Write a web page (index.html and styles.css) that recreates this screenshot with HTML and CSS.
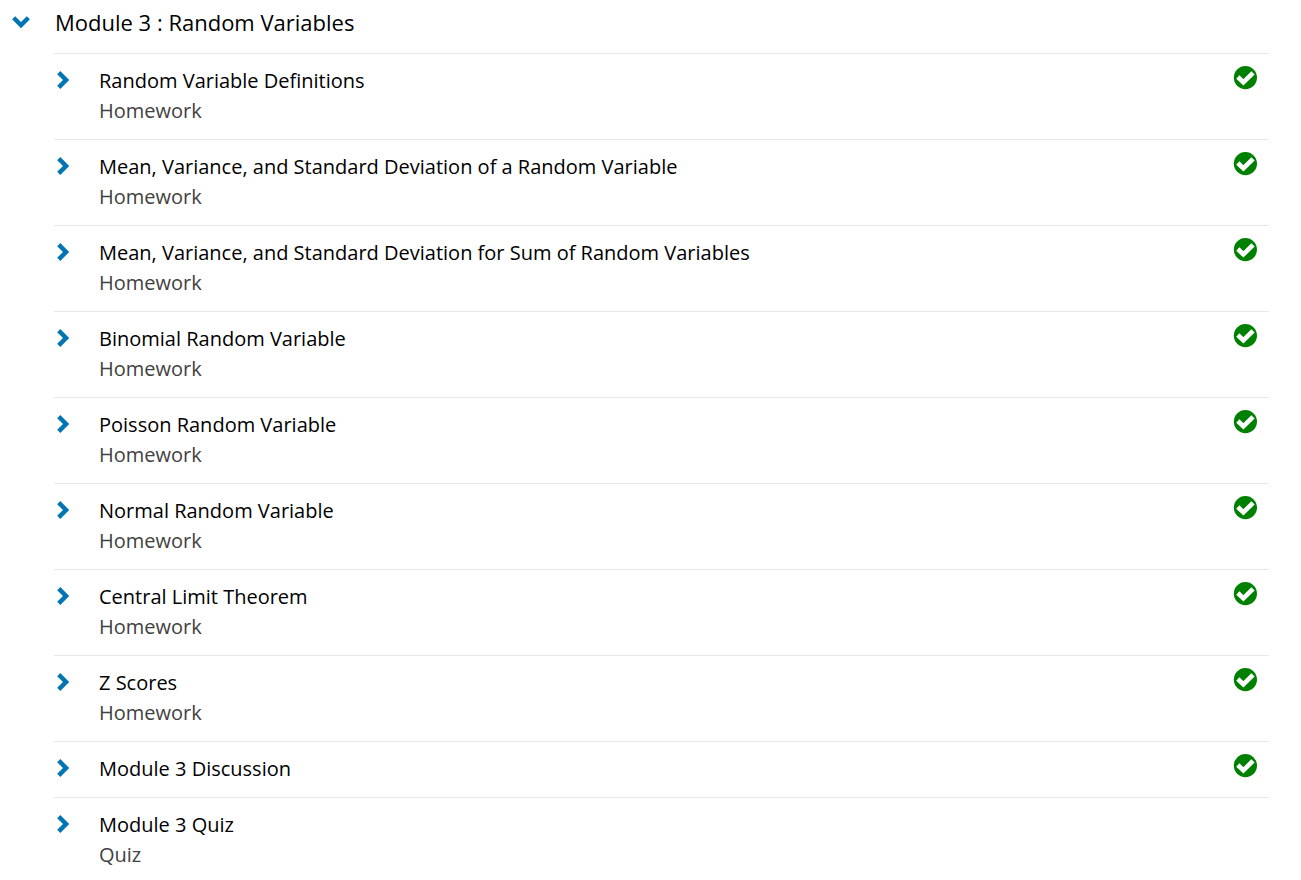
FILE: index.html
```
<!DOCTYPE html>
<html lang="en">
<head>
<meta charset="utf-8">
<title>Module 3 : Random Variables</title>
<link rel="stylesheet" href="styles.css">
</head>
<body>
<svg class="symbols" aria-hidden="true">
  <symbol id="chevron" viewBox="0 0 18 18"><path d="M3.2 3.2 6.3 0.1 15.2 9 6.3 17.9 3.2 14.8 9 9Z" fill="currentColor"/></symbol>
  <symbol id="check" viewBox="0 0 24 24"><circle cx="12.4" cy="11.6" r="11.6" fill="#008000"/><path d="M4.8 11 10.4 16.4 20 6.8" fill="none" stroke="#fff" stroke-width="4.6"/></symbol>
</svg>
<main class="module">
  <header class="module-header">
    <button class="toggle toggle-open" aria-label="Collapse module" aria-expanded="true"><svg><use href="#chevron"/></svg></button>
    <h1 class="module-title">Module 3 : Random Variables</h1>
  </header>
  <ul class="items">
    <li class="item"><button class="toggle" aria-label="Expand"><svg><use href="#chevron"/></svg></button><div class="text"><a class="name" href="#">Random Variable Definitions</a><p class="kind">Homework</p></div><svg class="done" role="img" aria-label="Completed"><use href="#check"/></svg></li>
    <li class="item"><button class="toggle" aria-label="Expand"><svg><use href="#chevron"/></svg></button><div class="text"><a class="name" href="#">Mean, Variance, and Standard Deviation of a Random Variable</a><p class="kind">Homework</p></div><svg class="done" role="img" aria-label="Completed"><use href="#check"/></svg></li>
    <li class="item"><button class="toggle" aria-label="Expand"><svg><use href="#chevron"/></svg></button><div class="text"><a class="name" href="#">Mean, Variance, and Standard Deviation for Sum of Random Variables</a><p class="kind">Homework</p></div><svg class="done" role="img" aria-label="Completed"><use href="#check"/></svg></li>
    <li class="item"><button class="toggle" aria-label="Expand"><svg><use href="#chevron"/></svg></button><div class="text"><a class="name" href="#">Binomial Random Variable</a><p class="kind">Homework</p></div><svg class="done" role="img" aria-label="Completed"><use href="#check"/></svg></li>
    <li class="item"><button class="toggle" aria-label="Expand"><svg><use href="#chevron"/></svg></button><div class="text"><a class="name" href="#">Poisson Random Variable</a><p class="kind">Homework</p></div><svg class="done" role="img" aria-label="Completed"><use href="#check"/></svg></li>
    <li class="item"><button class="toggle" aria-label="Expand"><svg><use href="#chevron"/></svg></button><div class="text"><a class="name" href="#">Normal Random Variable</a><p class="kind">Homework</p></div><svg class="done" role="img" aria-label="Completed"><use href="#check"/></svg></li>
    <li class="item"><button class="toggle" aria-label="Expand"><svg><use href="#chevron"/></svg></button><div class="text"><a class="name" href="#">Central Limit Theorem</a><p class="kind">Homework</p></div><svg class="done" role="img" aria-label="Completed"><use href="#check"/></svg></li>
    <li class="item"><button class="toggle" aria-label="Expand"><svg><use href="#chevron"/></svg></button><div class="text"><a class="name" href="#">Z Scores</a><p class="kind">Homework</p></div><svg class="done" role="img" aria-label="Completed"><use href="#check"/></svg></li>
    <li class="item"><button class="toggle" aria-label="Expand"><svg><use href="#chevron"/></svg></button><div class="text"><a class="name" href="#">Module 3 Discussion</a></div><svg class="done" role="img" aria-label="Completed"><use href="#check"/></svg></li>
    <li class="item"><button class="toggle" aria-label="Expand"><svg><use href="#chevron"/></svg></button><div class="text"><a class="name" href="#">Module 3 Quiz</a><p class="kind">Quiz</p></div></li>
  </ul>
</main>
</body>
</html>
```
FILE: styles.css
```
* {
  box-sizing: border-box;
}

body {
  margin: 0;
  background: #fff;
  color: #000;
  font-family: "Open Sans", "Noto Sans", sans-serif;
  font-size: 20px;
  line-height: 30px;
}

.symbols {
  display: none;
}

.module-header {
  display: flex;
  align-items: center;
  gap: 25px;
  padding: 7px 12px 16px;
}

.module-title {
  margin: 0;
  font-size: 22px;
  font-weight: 400;
}

.toggle {
  flex: none;
  width: 18px;
  height: 18px;
  padding: 0;
  border: 0;
  background: none;
  color: #0075b4;
  cursor: pointer;
}

.toggle svg {
  display: block;
  width: 18px;
  height: 18px;
}

.toggle-open {
  transform: rotate(90deg);
}

.items {
  margin: 0 32px 0 54px;
  padding: 0;
  list-style: none;
}

.item {
  display: flex;
  align-items: flex-start;
  padding: 12px 12px 13px 0;
  border-top: 1px solid #e7e7e7;
}

.item .toggle {
  margin-top: 5px;
}

.text {
  flex: 1;
  padding-left: 27px;
}

.name {
  display: block;
  color: #000;
  text-decoration: none;
}

.kind {
  margin: 0;
  color: #414141;
}

.done {
  flex: none;
  width: 24px;
  height: 24px;
}
```
